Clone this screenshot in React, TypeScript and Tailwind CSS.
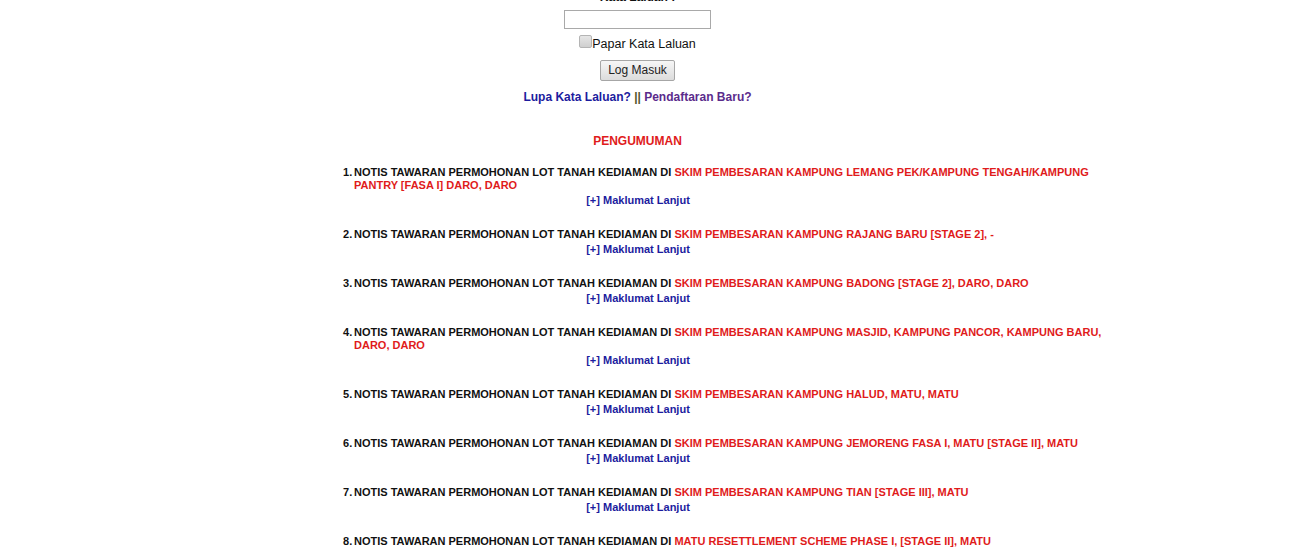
const items = [
  { black: "NOTIS TAWARAN PERMOHONAN LOT TANAH KEDIAMAN DI ", red: "SKIM PEMBESARAN KAMPUNG LEMANG PEK/KAMPUNG TENGAH/KAMPUNG PANTRY [FASA I] DARO, DARO" },
  { black: "NOTIS TAWARAN PERMOHONAN LOT TANAH KEDIAMAN DI ", red: "SKIM PEMBESARAN KAMPUNG RAJANG BARU [STAGE 2], -" },
  { black: "NOTIS TAWARAN PERMOHONAN LOT TANAH KEDIAMAN DI ", red: "SKIM PEMBESARAN KAMPUNG BADONG [STAGE 2], DARO, DARO" },
  { black: "NOTIS TAWARAN PERMOHONAN LOT TANAH KEDIAMAN DI ", red: "SKIM PEMBESARAN KAMPUNG MASJID, KAMPUNG PANCOR, KAMPUNG BARU, DARO, DARO" },
  { black: "NOTIS TAWARAN PERMOHONAN LOT TANAH KEDIAMAN DI ", red: "SKIM PEMBESARAN KAMPUNG HALUD, MATU, MATU" },
  { black: "NOTIS TAWARAN PERMOHONAN LOT TANAH KEDIAMAN DI ", red: "SKIM PEMBESARAN KAMPUNG JEMORENG FASA I, MATU [STAGE II], MATU" },
  { black: "NOTIS TAWARAN PERMOHONAN LOT TANAH KEDIAMAN DI ", red: "SKIM PEMBESARAN KAMPUNG TIAN [STAGE III], MATU" },
  { black: "NOTIS TAWARAN PERMOHONAN LOT TANAH KEDIAMAN DI ", red: "MATU RESETTLEMENT SCHEME PHASE I, [STAGE II], MATU" },
];

export default function App() {
  return (
    <div className="h-[547px] w-full overflow-hidden bg-white font-['Liberation_Sans',Arial,sans-serif] text-[#111]">
      {/* Login form */}
      <div className="flex w-[1275px] flex-col items-center">
        <div className="-mt-[10px] h-[14px] text-[12px] font-bold leading-[14px]">Kata Laluan :</div>
        <input
          type="password"
          className="mt-[6px] h-[19px] w-[147px] border border-[#a9a9a9] bg-white px-1 text-[12px] outline-none"
        />
        <label className="mt-[6px] flex h-[18px] items-start text-[12.5px] leading-[18px]">
          <input
            type="checkbox"
            className="h-[13px] w-[13px] appearance-none rounded-[2px] border border-[#b4b4b4] bg-gradient-to-b from-[#e6e6e6] to-[#cfcfcf]"
          />
          Papar Kata Laluan
        </label>
        <button className="mt-[7px] h-[21px] w-[75px] rounded-[2px] border border-[#a6a6a6] bg-gradient-to-b from-[#f6f6f6] to-[#dcdcdc] text-[12px] leading-[19px] text-[#222]">
          Log Masuk
        </button>
        <div className="mt-[9px] text-[12px] font-bold leading-[14px]">
          <a className="text-[#1c1c9e]">Lupa Kata Laluan?</a>
          <span className="text-[#55552a]"> || </span>
          <a className="text-[#5b2b8c]">Pendaftaran Baru?</a>
        </div>
        <div className="mt-[30px] text-[12px] font-bold leading-[14px] text-[#e01b1b]">PENGUMUMAN</div>
      </div>

      {/* Announcements */}
      <ol className="mt-[18px] ml-[343px] flex flex-col gap-[21px]">
        {items.map((it, i) => (
          <li key={i} className="text-[11px] font-bold leading-[13px]">
            <div className="flex">
              <span className="w-[11px] shrink-0">{i + 1}.</span>
              <div className="w-[765px]">
                {it.black}
                <span className="text-[#e01b1b]">{it.red}</span>
              </div>
            </div>
            <div className="mt-[2px] w-[590px] text-center">
              <a className="text-[#1c1c9e]">[+] Maklumat Lanjut</a>
            </div>
          </li>
        ))}
      </ol>
    </div>
  );
}
